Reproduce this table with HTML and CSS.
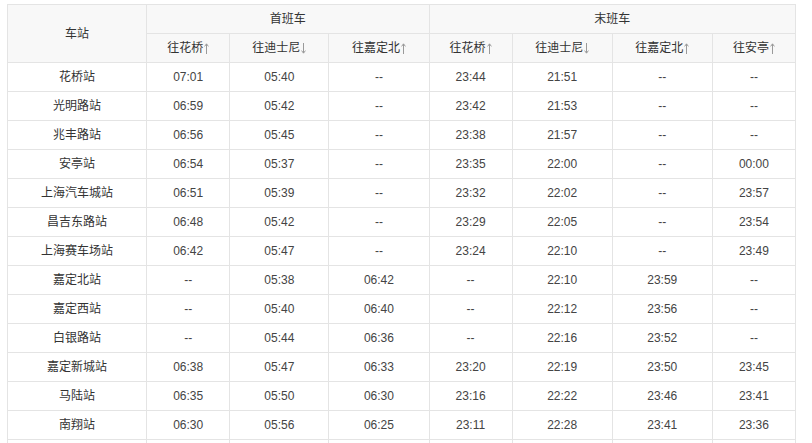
FILE: index.html
```html
<!DOCTYPE html>
<html lang="zh-CN">
<head>
<meta charset="utf-8">
<title>时刻表</title>
<link rel="stylesheet" href="styles.css">
</head>
<body>
<table class="tt">
  <colgroup>
    <col class="c-st"><col class="c-1"><col class="c-2"><col class="c-3">
    <col class="c-1"><col class="c-3"><col class="c-3"><col class="c-1">
  </colgroup>
  <thead>
    <tr>
      <th rowspan="2">车站</th>
      <th colspan="3">首班车</th>
      <th colspan="4">末班车</th>
    </tr>
    <tr>
      <th>往花桥<svg class="ar" viewBox="0 0 5 11" width="5" height="11"><path d="M2.5 1V11M0.6 3.4L2.5 0.8L4.4 3.4" fill="none" stroke="#9a9a9a" stroke-width="1"/></svg></th>
      <th>往迪士尼<svg class="ar" viewBox="0 0 5 11" width="5" height="11"><path d="M2.5 0V10M0.6 7.6L2.5 10.2L4.4 7.6" fill="none" stroke="#9a9a9a" stroke-width="1"/></svg></th>
      <th>往嘉定北<svg class="ar" viewBox="0 0 5 11" width="5" height="11"><path d="M2.5 1V11M0.6 3.4L2.5 0.8L4.4 3.4" fill="none" stroke="#9a9a9a" stroke-width="1"/></svg></th>
      <th>往花桥<svg class="ar" viewBox="0 0 5 11" width="5" height="11"><path d="M2.5 1V11M0.6 3.4L2.5 0.8L4.4 3.4" fill="none" stroke="#9a9a9a" stroke-width="1"/></svg></th>
      <th>往迪士尼<svg class="ar" viewBox="0 0 5 11" width="5" height="11"><path d="M2.5 0V10M0.6 7.6L2.5 10.2L4.4 7.6" fill="none" stroke="#9a9a9a" stroke-width="1"/></svg></th>
      <th>往嘉定北<svg class="ar" viewBox="0 0 5 11" width="5" height="11"><path d="M2.5 1V11M0.6 3.4L2.5 0.8L4.4 3.4" fill="none" stroke="#9a9a9a" stroke-width="1"/></svg></th>
      <th>往安亭<svg class="ar" viewBox="0 0 5 11" width="5" height="11"><path d="M2.5 1V11M0.6 3.4L2.5 0.8L4.4 3.4" fill="none" stroke="#9a9a9a" stroke-width="1"/></svg></th>
    </tr>
  </thead>
  <tbody>
    <tr><td class="st">花桥站</td><td>07:01</td><td>05:40</td><td>--</td><td>23:44</td><td>21:51</td><td>--</td><td>--</td></tr>
    <tr><td class="st">光明路站</td><td>06:59</td><td>05:42</td><td>--</td><td>23:42</td><td>21:53</td><td>--</td><td>--</td></tr>
    <tr><td class="st">兆丰路站</td><td>06:56</td><td>05:45</td><td>--</td><td>23:38</td><td>21:57</td><td>--</td><td>--</td></tr>
    <tr><td class="st">安亭站</td><td>06:54</td><td>05:37</td><td>--</td><td>23:35</td><td>22:00</td><td>--</td><td>00:00</td></tr>
    <tr><td class="st">上海汽车城站</td><td>06:51</td><td>05:39</td><td>--</td><td>23:32</td><td>22:02</td><td>--</td><td>23:57</td></tr>
    <tr><td class="st">昌吉东路站</td><td>06:48</td><td>05:42</td><td>--</td><td>23:29</td><td>22:05</td><td>--</td><td>23:54</td></tr>
    <tr><td class="st">上海赛车场站</td><td>06:42</td><td>05:47</td><td>--</td><td>23:24</td><td>22:10</td><td>--</td><td>23:49</td></tr>
    <tr><td class="st">嘉定北站</td><td>--</td><td>05:38</td><td>06:42</td><td>--</td><td>22:10</td><td>23:59</td><td>--</td></tr>
    <tr><td class="st">嘉定西站</td><td>--</td><td>05:40</td><td>06:40</td><td>--</td><td>22:12</td><td>23:56</td><td>--</td></tr>
    <tr><td class="st">白银路站</td><td>--</td><td>05:44</td><td>06:36</td><td>--</td><td>22:16</td><td>23:52</td><td>--</td></tr>
    <tr><td class="st">嘉定新城站</td><td>06:38</td><td>05:47</td><td>06:33</td><td>23:20</td><td>22:19</td><td>23:50</td><td>23:45</td></tr>
    <tr><td class="st">马陆站</td><td>06:35</td><td>05:50</td><td>06:30</td><td>23:16</td><td>22:22</td><td>23:46</td><td>23:41</td></tr>
    <tr><td class="st">南翔站</td><td>06:30</td><td>05:56</td><td>06:25</td><td>23:11</td><td>22:28</td><td>23:41</td><td>23:36</td></tr>
    <tr><td></td><td></td><td></td><td></td><td></td><td></td><td></td><td></td></tr>
  </tbody>
</table>
</body>
</html>
```

FILE: styles.css
```css
html, body {
  margin: 0;
  padding: 0;
  background: #ffffff;
}
body {
  padding: 4px 0 0 7px;
  font-family: "Liberation Sans", "Noto Sans CJK SC", sans-serif;
  font-size: 12px;
  color: #333333;
}
.tt {
  border-collapse: collapse;
  table-layout: fixed;
  width: 789px;
}
.c-st { width: 139px; }
.c-1 { width: 83px; }
.c-2 { width: 99px; }
.c-3 { width: 100px; }
.tt th, .tt td {
  border: 1px solid #e4e4e4;
  height: 28px;
  padding: 0;
  text-align: center;
  vertical-align: middle;
  font-weight: normal;
  line-height: 16px;
}
.tt th {
  background: #f8f8f8;
  color: #333333;
}
.tt td {
  color: #444444;
}
.tt td.st {
  color: #333333;
}
.ar {
  display: inline-block;
  vertical-align: -2px;
  margin-left: 1px;
}
```
